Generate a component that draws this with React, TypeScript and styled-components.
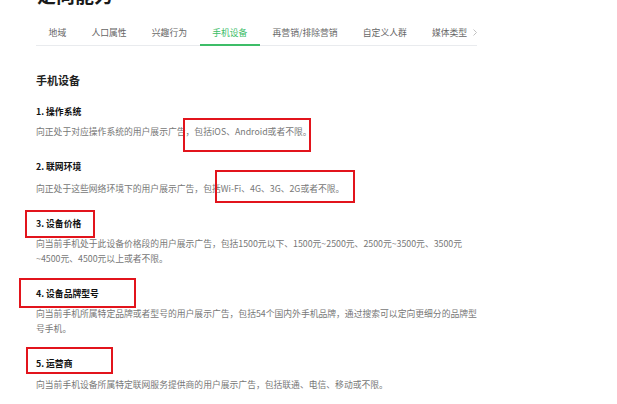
import React from "react";
import styled, { createGlobalStyle } from "styled-components";

const GlobalStyle = createGlobalStyle`
  html, body { margin: 0; padding: 0; background: #fff; }
  body {
    font-family: "Noto Sans", "Noto Sans CJK SC", sans-serif;
    overflow: hidden;
  }
`;

const Page = styled.div`
  width: 441px;
  padding-left: 36px;
`;

const Title = styled.h1`
  margin: -17px 0 0 1px;
  font-size: 19px;
  line-height: 24px;
  font-weight: 700;
  color: #1b1b1b;
  font-family: "Noto Sans CJK SC", sans-serif;
`;

const TabBar = styled.div`
  display: flex;
  align-items: flex-end;
  margin-top: 14px;
  border-bottom: 1px solid #e9ebee;
`;

const TabList = styled.div`
  display: flex;
  flex: 1;
  white-space: nowrap;
`;

const Tab = styled.div<{ $active?: boolean }>`
  flex: none;
  padding: 4px 12.6px;
  margin-bottom: -1px;
  font-size: 8.8px;
  line-height: 15px;
  color: ${(p) => (p.$active ? "#3dbd68" : "#666")};
  border-bottom: 2px solid ${(p) => (p.$active ? "#3dbd68" : "transparent")};
  font-family: "Noto Sans CJK SC", sans-serif;

  &:last-child {
    padding-right: 4px;
  }
`;

const Arrow = styled.div`
  flex: none;
  width: 8px;
  height: 25px;
  display: flex;
  align-items: center;
  justify-content: center;
  margin-bottom: -1px;
  padding-bottom: 2px;
  box-sizing: border-box;
`;

const Heading = styled.h2`
  margin: 26px 0 0;
  font-size: 11px;
  line-height: 16px;
  font-weight: 700;
  color: #222;
  font-family: "Noto Sans CJK SC", sans-serif;
`;

const Section = styled.section<{ $first?: boolean }>`
  position: relative;
  margin-top: ${(p) => (p.$first ? "16px" : "20px")};
`;

const SubHeading = styled.h3`
  margin: 0;
  font-size: 8.8px;
  line-height: 15px;
  font-weight: 700;
  color: #111;
  font-family: "Noto Sans CJK SC", sans-serif;
`;

const Desc = styled.p<{ $gap?: number }>`
  margin: ${(p) => p.$gap ?? 5}px 0 0;
  font-size: 8.8px;
  line-height: 15px;
  color: #777;
  font-family: "Noto Sans CJK SC", sans-serif;
`;

const Mark = styled.div<{ $top: number; $left: number; $w: number; $h: number }>`
  position: absolute;
  top: ${(p) => p.$top}px;
  left: ${(p) => p.$left}px;
  width: ${(p) => p.$w}px;
  height: ${(p) => p.$h}px;
  border: 2px solid #e2141c;
  box-sizing: border-box;
  pointer-events: none;
`;

const tabs = ["地域", "人口属性", "兴趣行为", "手机设备", "再营销/排除营销", "自定义人群", "媒体类型"];

const sections = [
  {
    title: "1. 操作系统",
    desc: "向正处于对应操作系统的用户展示广告，包括iOS、Android或者不限。",
    gap: 5,
    box: { top: 14, left: 147, w: 128, h: 34 },
  },
  {
    title: "2. 联网环境",
    desc: "向正处于这些网络环境下的用户展示广告，包括Wi-Fi、4G、3G、2G或者不限。",
    gap: 7,
    box: { top: 11, left: 179, w: 140, h: 33 },
  },
  {
    title: "3. 设备价格",
    desc: "向当前手机处于此设备价格段的用户展示广告，包括1500元以下、1500元~2500元、2500元~3500元、3500元~4500元、4500元以上或者不限。",
    gap: 5,
    box: { top: -6, left: -11, w: 70, h: 28 },
  },
  {
    title: "4. 设备品牌型号",
    desc: "向当前手机所属特定品牌或者型号的用户展示广告，包括54个国内外手机品牌，通过搜索可以定向更细分的品牌型号手机。",
    gap: 5,
    box: { top: -8, left: -17, w: 117, h: 30 },
  },
  {
    title: "5. 运营商",
    desc: "向当前手机设备所属特定联网服务提供商的用户展示广告，包括联通、电信、移动或不限。",
    gap: 6,
    box: { top: -9, left: -10, w: 87, h: 27 },
  },
];

export default function App() {
  return (
    <>
      <GlobalStyle />
      <Page>
        <Title>定向能力</Title>
        <TabBar>
          <TabList>
            {tabs.map((t) => (
              <Tab key={t} $active={t === "手机设备"}>
                {t}
              </Tab>
            ))}
          </TabList>
          <Arrow>
            <svg width="4" height="7" viewBox="0 0 4 7">
              <path d="M0.5 0.5 L3.5 3.5 L0.5 6.5" fill="none" stroke="#bbb" strokeWidth="0.9" />
            </svg>
          </Arrow>
        </TabBar>
        <Heading>手机设备</Heading>
        {sections.map((s, i) => (
          <Section key={s.title} $first={i === 0}>
            <SubHeading>{s.title}</SubHeading>
            <Desc $gap={s.gap}>{s.desc}</Desc>
            <Mark $top={s.box.top} $left={s.box.left} $w={s.box.w} $h={s.box.h} />
          </Section>
        ))}
      </Page>
    </>
  );
}
